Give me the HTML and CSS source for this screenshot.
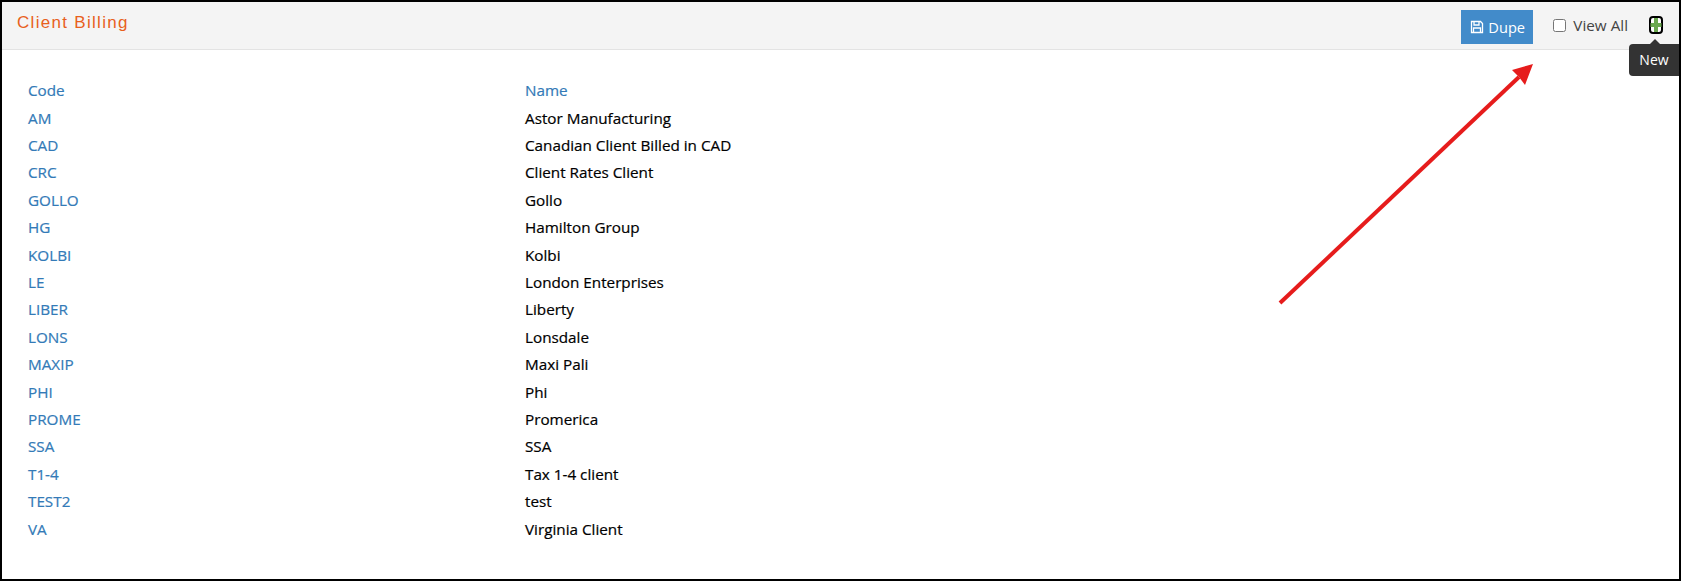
FILE: index.html
```html
<!DOCTYPE html>
<html lang="en">
<head>
<meta charset="utf-8">
<title>Client Billing</title>
<link rel="stylesheet" href="styles.css">
</head>
<body>
<div class="frame">
  <header class="bar">
    <h1 class="title">Client Billing</h1>
    <div class="tools">
      <button class="dupe" type="button">
        <svg class="save" width="14" height="14" viewBox="0 0 14 14" fill="none" stroke="#fff" stroke-width="1.3"><path d="M1.5 1.5h9l2 2v9h-11z"/><path d="M4 1.5v3.5h5V1.5"/><path d="M3.5 12.5V8h7v4.5"/></svg>
        Dupe
      </button>
      <label class="viewall"><span class="check"></span>View All</label>
      <span class="newicon"><svg width="14" height="18" viewBox="0 0 14 18"><rect x="1" y="1" width="12" height="16" rx="3" fill="#fff" stroke="#000" stroke-width="2"/><path d="M5 2h4v5h3.500v4H9v5H5v-5H1.500V7H5z" fill="#6aa84f"/></svg></span>
    </div>
  </header>
  <div class="tip"><span class="tiptext">New</span></div>
  <svg class="arrow" width="270" height="260" viewBox="0 0 270 260"><path d="M10 249 L249 23" stroke="#e61c1c" stroke-width="4" fill="none"/><path d="M263 10 L242 16 L249 23 L255 31 Z" fill="#e61c1c"/></svg>
  <main class="list">
    <div class="row head"><a>Code</a><span>Name</span></div>
    <div class="row"><a>AM</a><span>Astor Manufacturing</span></div>
    <div class="row"><a>CAD</a><span>Canadian Client Billed in CAD</span></div>
    <div class="row"><a>CRC</a><span>Client Rates Client</span></div>
    <div class="row"><a>GOLLO</a><span>Gollo</span></div>
    <div class="row"><a>HG</a><span>Hamilton Group</span></div>
    <div class="row"><a>KOLBI</a><span>Kolbi</span></div>
    <div class="row"><a>LE</a><span>London Enterprises</span></div>
    <div class="row"><a>LIBER</a><span>Liberty</span></div>
    <div class="row"><a>LONS</a><span>Lonsdale</span></div>
    <div class="row"><a>MAXIP</a><span>Maxi Pali</span></div>
    <div class="row"><a>PHI</a><span>Phi</span></div>
    <div class="row"><a>PROME</a><span>Promerica</span></div>
    <div class="row"><a>SSA</a><span>SSA</span></div>
    <div class="row"><a>T1-4</a><span>Tax 1-4 client</span></div>
    <div class="row"><a>TEST2</a><span>test</span></div>
    <div class="row"><a>VA</a><span>Virginia Client</span></div>
  </main>
</div>
</body>
</html>
```
FILE: styles.css
```css
* { box-sizing: border-box; }
html, body { margin: 0; height: 100%; }
body { background: #fff; font-family: "Open Sans", sans-serif; font-size: 15.250px; color: #000; overflow: hidden; }
.frame { position: relative; width: 1681px; height: 581px; border: 2px solid #000; overflow: hidden; }
.bar { display: flex; justify-content: space-between; height: 48px; background: #f4f4f4; border-bottom: 1px solid #e3e3e3; }
.title { margin: 10px 0 0 15px; font-family: "Liberation Sans", Arial, sans-serif; font-weight: 400; font-size: 17px; line-height: 22px; letter-spacing: 1.300px; color: #e8601c; }
.tools { display: flex; align-items: flex-start; }
.dupe { display: flex; align-items: center; gap: 4px; width: 72px; height: 34px; margin-top: 8px; padding: 0 0 0 9px; border: 0; background: #428bca; color: #fff; font-family: "Open Sans", sans-serif; font-size: 14.600px; }
.save { flex: none; }
.viewall { display: flex; align-items: center; margin: 13px 0 0 20px; line-height: 20px; color: #444; }
.check { width: 13px; height: 13px; margin-right: 7px; border: 1px solid #767676; border-radius: 2.500px; background: #fff; }
.newicon { display: block; width: 14px; height: 18px; margin: 14px 16px 0 21px; line-height: 0; }
.tip { position: absolute; right: 0; top: 42px; width: 50px; height: 32px; padding-bottom: 2px; background: #333; border-radius: 4px 0 0 4px; color: #fff; display: flex; align-items: center; justify-content: center; font-size: 14px; }
.tip::before { content: ""; position: absolute; top: -5px; left: 21px; border-left: 5px solid transparent; border-right: 5px solid transparent; border-bottom: 5px solid #333; }
.arrow { position: absolute; left: 1268px; top: 52px; }
.list { padding: 27.300px 0 0 26px; -webkit-text-stroke: 0.200px; }
.row { display: flex; height: 27.400px; line-height: 27.400px; }
.row a { width: 497px; color: #337ab7; }
.head span { color: #337ab7; }
```
